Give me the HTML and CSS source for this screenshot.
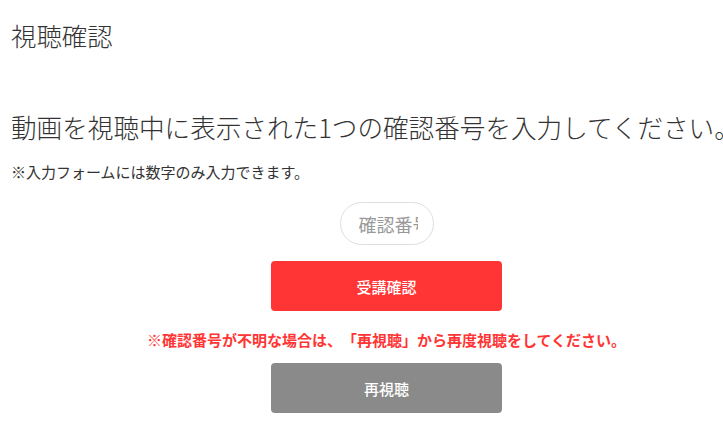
FILE: index.html
```html
<!DOCTYPE html>
<html lang="ja">
<head>
<meta charset="utf-8">
<title>視聴確認</title>
<link rel="stylesheet" href="styles.css">
</head>
<body>
<div class="page">
  <h1 class="title">視聴確認</h1>
  <h2 class="lead">動画を視聴中に表示された1つの確認番号を入力してください。</h2>
  <p class="note">※入力フォームには数字のみ入力できます。</p>
  <form class="form" onsubmit="return false;">
    <input class="code" type="text" inputmode="numeric" placeholder="確認番号">
    <button class="btn btn-red" type="submit">受講確認</button>
    <p class="warn">※確認番号が不明な場合は、「再視聴」から再度視聴をしてください。</p>
    <button class="btn btn-gray" type="button">再視聴</button>
  </form>
</div>
</body>
</html>
```
FILE: styles.css
```css
html, body {
  margin: 0;
  padding: 0;
  background: #fff;
  overflow: hidden;
}
body {
  font-family: "Noto Sans CJK JP", "Noto Sans", sans-serif;
  color: #333;
  text-spacing-trim: space-all;
}
.page {
  box-sizing: border-box;
  padding: 0 0 0 11px;
}
.title {
  margin: 17px 0 0;
  font-size: 25.4px;
  line-height: 36px;
  font-weight: 300;
  color: #333;
}
.lead {
  margin: 56px 0 0;
  font-size: 25.6px;
  line-height: 36px;
  font-weight: 300;
  color: #333;
  white-space: nowrap;
}
.note {
  margin: 16px 0 0;
  font-size: 15px;
  line-height: 22px;
  font-weight: 400;
  color: #333;
}
.form {
  display: flex;
  flex-direction: column;
  align-items: center;
  margin-top: 19px;
  margin-left: -11px;
  padding-left: 50px;
}
.code {
  width: 94px;
  height: 43px;
  box-sizing: border-box;
  border: 1px solid #dedede;
  border-radius: 22px;
  padding: 0 15px 0 18px;
  font-family: inherit;
  font-size: 18px;
  color: #333;
  outline: none;
  background: #fff;
}
.code::placeholder {
  color: #999;
  font-weight: 400;
}
.btn {
  width: 231px;
  height: 50px;
  border: none;
  border-radius: 4px;
  font-family: inherit;
  font-size: 15px;
  font-weight: 500;
  color: #fff;
  cursor: pointer;
}
.btn-red {
  margin-top: 16px;
  background: #ff3535;
}
.btn-gray {
  margin-top: 12px;
  background: #8a8a8a;
}
.warn {
  margin: 18px 0 0;
  font-size: 15px;
  line-height: 22px;
  font-weight: 700;
  color: #ff3535;
  white-space: nowrap;
}
```
